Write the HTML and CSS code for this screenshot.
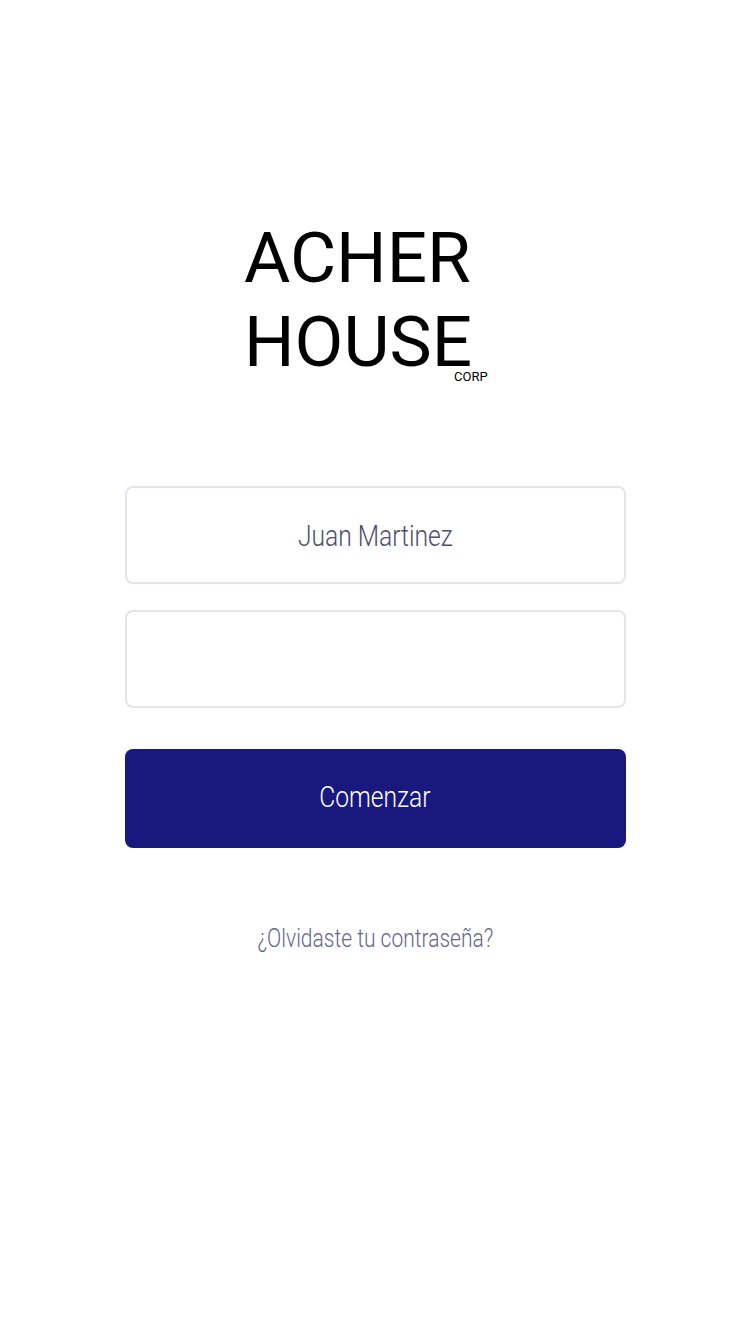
FILE: index.html
```html
<!DOCTYPE html>
<html lang="es">
<head>
<meta charset="utf-8">
<title>Acher House</title>
<link rel="stylesheet" href="styles.css">
</head>
<body>
<main class="page">
  <div class="logo">
    <div class="logo-line">ACHER</div>
    <div class="logo-line">HOUSE<span class="corp">CORP</span></div>
  </div>
  <form class="form">
    <div class="field"><span class="cond field-text">Juan Martinez</span></div>
    <div class="field"></div>
    <button type="button" class="btn"><span class="cond btn-text">Comenzar</span></button>
  </form>
  <a class="cond forgot" href="#">¿Olvidaste tu contraseña?</a>
</main>
</body>
</html>
```
FILE: styles.css
```css
html, body { margin: 0; padding: 0; background: #fff; }
body { width: 750px; height: 1334px; overflow: hidden; font-family: "Roboto", "Liberation Sans", sans-serif; }
.page { display: flex; flex-direction: column; align-items: center; padding-top: 216px; }
.logo { display: flex; flex-direction: column; align-items: flex-start; margin-right: 34px; color: #000; }
.logo-line { font-size: 71px; line-height: 84px; font-weight: 400; position: relative; }
.corp { position: absolute; font-size: 13px; line-height: 13px; left: 100%; bottom: 1px; margin-left: -18px; }
.form { display: flex; flex-direction: column; width: 501px; margin-top: 102px; gap: 26px; }
.field { box-sizing: border-box; height: 98px; border: 2px solid #e2e4ef; border-radius: 8px; display: flex; align-items: center; justify-content: center; }
.cond { font-family: "Roboto", sans-serif; font-weight: 300; display: inline-block; transform: scaleX(0.82); }
.field-text { font-size: 30px; color: #4d4d6e; }
.btn { margin-top: 15px; height: 99px; border: 0; border-radius: 8px; background: #19187e; color: #fff; font-size: 30px; font-family: "Roboto", sans-serif; padding: 0 0 4px; }
.forgot { margin-top: 76px; font-size: 25px; color: #66668a; text-decoration: none; transform: scaleX(0.84); }
```
